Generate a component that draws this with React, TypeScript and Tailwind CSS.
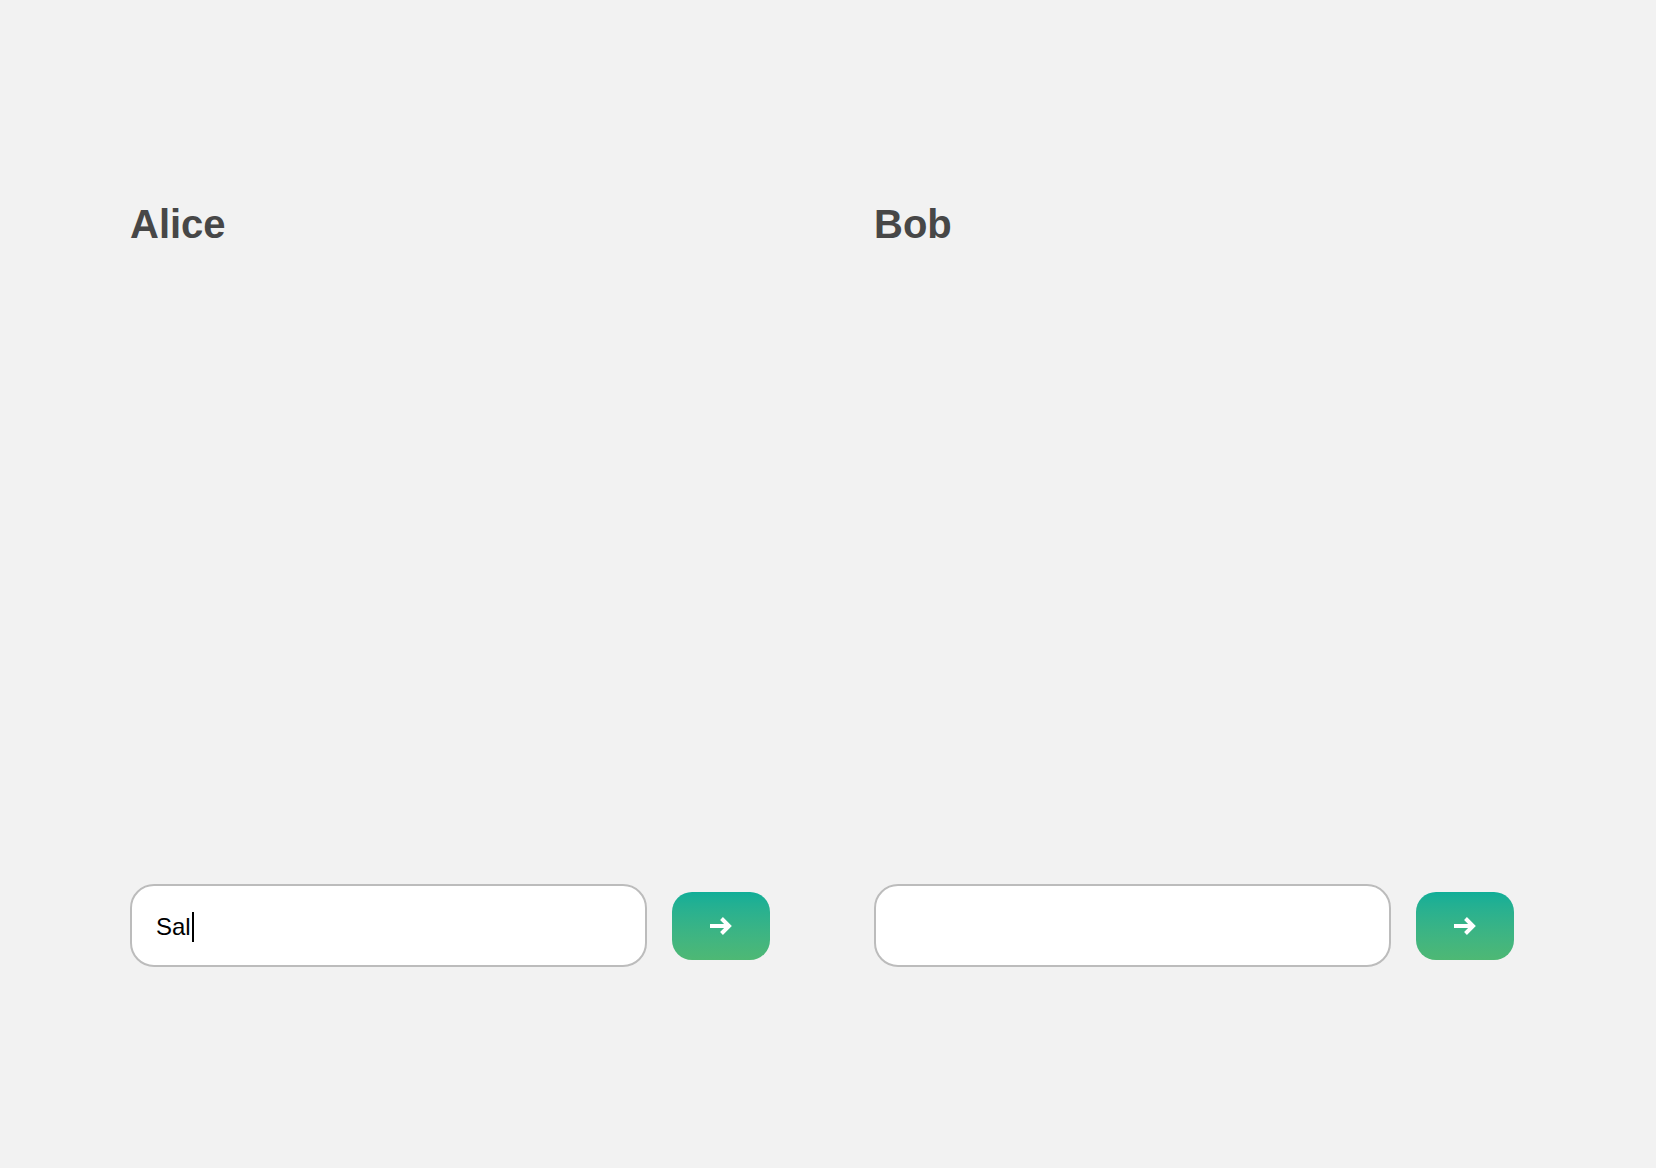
import React from "react";

function Arrow() {
  return (
    <svg width="24" height="20" viewBox="0 0 24 20" fill="none">
      <path d="M1 10 H20" stroke="white" strokeWidth="4" strokeLinecap="butt" />
      <path d="M12.5 2.5 L20 10 L12.5 17.5" stroke="white" strokeWidth="4" strokeLinecap="butt" strokeLinejoin="miter" />
    </svg>
  );
}

function Column({ name, value }: { name: string; value: string }) {
  return (
    <div className="flex h-[767px] w-[640px] flex-col justify-between">
      <h2
        className="text-[40px] leading-[48px] font-bold text-[#474747]"
        style={{ fontFamily: '"Liberation Sans", Arial, sans-serif' }}
      >
        {name}
      </h2>
      <div className="flex items-center gap-[25px]">
        <div className="flex h-[83px] w-[517px] items-center rounded-[24px] border-2 border-[#bcbcbc] bg-white pl-[24px] pt-[2px]">
          <span
            className="text-[24px] leading-none text-black"
            style={{ fontFamily: '"Liberation Sans", Arial, sans-serif' }}
          >
            {value}
          </span>
          {value && <span className="ml-[1px] inline-block h-[30px] w-[2px] bg-black" />}
        </div>
        <button className="flex h-[68px] w-[98px] items-center justify-center rounded-[20px] bg-gradient-to-b from-[#10ae98] to-[#4eb874]">
          <Arrow />
        </button>
      </div>
    </div>
  );
}

export default function App() {
  return (
    <div className="min-h-[1168px] w-full bg-[#f2f2f2] pl-[130px] pt-[200px]">
      <div className="flex gap-[104px]">
        <Column name="Alice" value="Sal" />
        <Column name="Bob" value="" />
      </div>
    </div>
  );
}
